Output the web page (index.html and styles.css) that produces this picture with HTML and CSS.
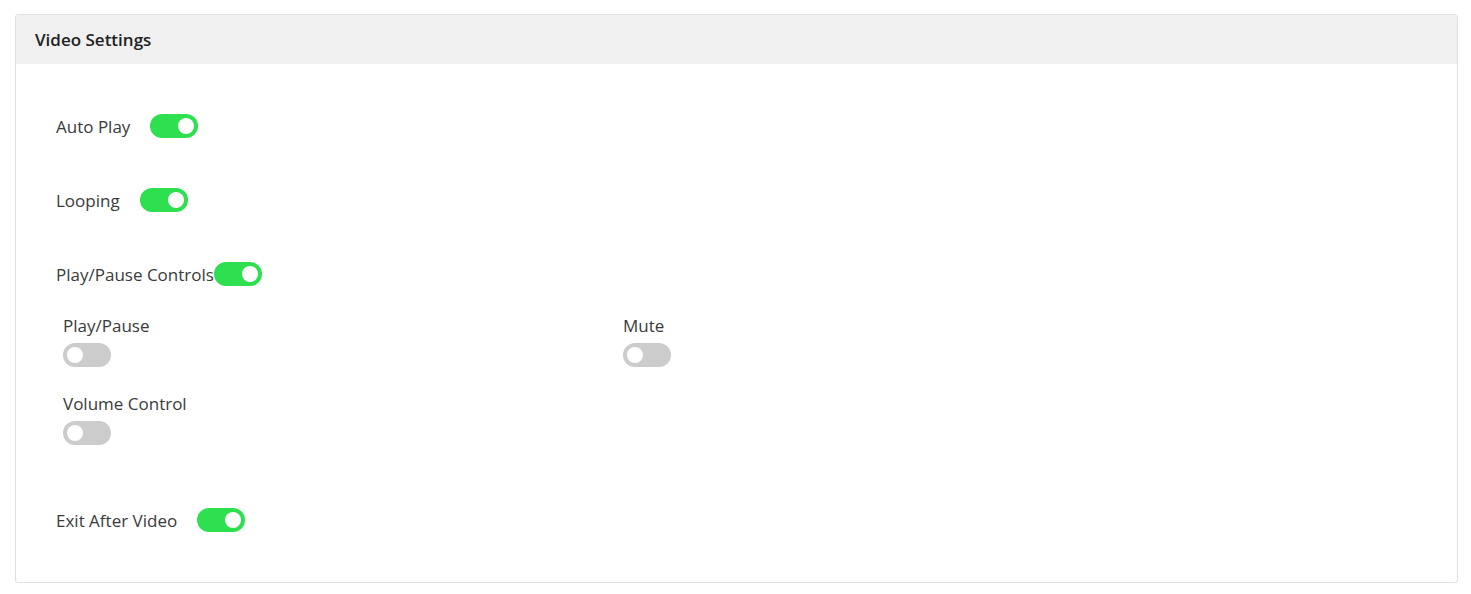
FILE: index.html
```html
<!DOCTYPE html>
<html lang="en">
<head>
    <meta charset="UTF-8">
    <meta name="viewport" content="width=device-width, initial-scale=1.0">
    <title>Video Settings</title>
    <link rel="stylesheet" href="styles.css">
</head>
<body>
    <div class="card">
        <div class="card-header">Video Settings</div>

        <div class="card-body">
            <div class="setting-row">
                <span class="setting-label">Auto Play</span>
                <label class="switch">
                    <input type="checkbox" checked>
                    <span class="slider"></span>
                </label>
            </div>

            <div class="setting-row">
                <span class="setting-label">Looping</span>
                <label class="switch">
                    <input type="checkbox" checked>
                    <span class="slider"></span>
                </label>
            </div>

            <div class="setting-row">
                <span class="setting-label tight">Play/Pause Controls</span>
                <label class="switch">
                    <input type="checkbox" checked>
                    <span class="slider"></span>
                </label>
            </div>

            <div class="sub-settings">
                <div class="sub-item">
                    <span class="sub-label">Play/Pause</span>
                    <label class="switch">
                        <input type="checkbox">
                        <span class="slider"></span>
                    </label>
                </div>
                <div class="sub-item">
                    <span class="sub-label">Mute</span>
                    <label class="switch">
                        <input type="checkbox">
                        <span class="slider"></span>
                    </label>
                </div>
                <div class="sub-item">
                    <span class="sub-label">Volume Control</span>
                    <label class="switch">
                        <input type="checkbox">
                        <span class="slider"></span>
                    </label>
                </div>
            </div>

            <div class="setting-row exit-row">
                <span class="setting-label">Exit After Video</span>
                <label class="switch">
                    <input type="checkbox" checked>
                    <span class="slider"></span>
                </label>
            </div>
        </div>
    </div>
</body>
</html>
```

FILE: styles.css
```css
* {
    margin: 0;
    padding: 0;
    box-sizing: border-box;
}

body {
    font-family: 'Open Sans', 'Noto Sans', sans-serif;
    background: #fff;
    color: #3a3a3a;
    padding: 14px 13px 0 15px;
}

.card {
    border: 1px solid #e0e0e0;
    border-radius: 3px;
    box-shadow: 0 1px 2px rgba(0, 0, 0, 0.04);
    background: white;
}

.card-header {
    background: #f0f0f0;
    height: 49px;
    padding: 0 19px;
    display: flex;
    align-items: center;
    font-size: 17px;
    font-weight: 600;
    color: #222;
}

.card-body {
    padding: 50px 40px 50px 40px;
}

.setting-row {
    display: flex;
    align-items: center;
    height: 24px;
    margin-bottom: 50px;
}

.setting-row:nth-child(3) {
    margin-bottom: 29px;
}

.setting-label {
    font-size: 17px;
    margin-right: 20px;
}

.setting-label.tight {
    margin-right: 0;
}

.sub-settings {
    display: grid;
    grid-template-columns: 560px 1fr;
    row-gap: 26px;
    padding-left: 7px;
    margin-bottom: 63px;
}

.sub-item {
    display: flex;
    flex-direction: column;
    align-items: flex-start;
    gap: 6px;
}

.sub-label {
    font-size: 17px;
    line-height: 22px;
}

.exit-row {
    margin-bottom: 0;
}

/* toggle */
.switch {
    position: relative;
    display: inline-block;
    width: 48px;
    height: 24px;
    flex-shrink: 0;
}

.switch input {
    opacity: 0;
    width: 0;
    height: 0;
}

.slider {
    position: absolute;
    inset: 0;
    background: #cccccc;
    border-radius: 12px;
    cursor: pointer;
}

.slider::before {
    content: "";
    position: absolute;
    width: 16px;
    height: 16px;
    left: 4px;
    top: 4px;
    background: white;
    border-radius: 50%;
    transition: transform 0.2s ease;
}

.switch input:checked + .slider {
    background: #2ee04f;
}

.switch input:checked + .slider::before {
    transform: translateX(24px);
}
```
